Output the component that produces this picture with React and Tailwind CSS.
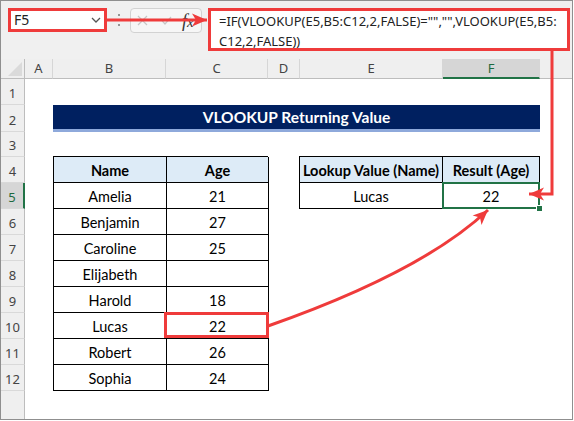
import React from "react";

const RED = "#ef3b3b";

function HeaderCell({ children, selected, last }) {
  return (
    <div
      className={
        "flex items-center justify-center pt-[1px] text-[13px] font-['Noto_Sans',sans-serif] border-b border-[#bdbdbd] " +
        (last ? "" : "border-r border-r-[#d6d6d6] ") +
        (selected
          ? "bg-[#d6d6d6] text-[#1d6a3f] border-b-2 border-b-[#217346]"
          : "bg-[#efefef] text-[#444]")
      }
    >
      {children}
    </div>
  );
}

function RowHead({ n, selected }) {
  return (
    <div
      className={
        "flex items-end justify-center pb-[1px] text-[13px] leading-[19px] font-['Noto_Sans',sans-serif] border-b border-[#d9d9d9] " +
        (selected
          ? "bg-[#d6d6d6] text-[#1d6a3f] border-r-2 border-r-[#217346]"
          : "bg-[#efefef] text-[#444] border-r border-r-[#bdbdbd]")
      }
    >
      {n}
    </div>
  );
}

const people = [
  ["Amelia", "21"],
  ["Benjamin", "27"],
  ["Caroline", "25"],
  ["Elijabeth", ""],
  ["Harold", "18"],
  ["Lucas", "22"],
  ["Robert", "26"],
  ["Sophia", "24"],
];

function Cell({ children, bold, head, className = "", overlay }) {
  return (
    <div
      className={
        "relative flex items-center justify-center pt-[2px] border-r border-b border-black text-[14.5px] text-black font-['Lato',sans-serif] " +
        (bold ? "font-bold " : "") +
        (head ? "bg-[#ddebf7] " : "bg-white ") +
        className
      }
    >
      {children}
      {overlay}
    </div>
  );
}

export default function App() {
  return (
    <div className="relative w-[574px] h-[421px] bg-white overflow-hidden">
      <div className="w-[573px] h-[420px] border border-[#8f8f8f] bg-[#f0f0f0] flex flex-col">
        {/* Formula bar */}
        <div className="h-[58px] flex items-start pt-[7px] pl-[7px]">
          <div className="w-[99px] h-[24px] border-[3px] border-[#ef3b3b] bg-white flex items-center justify-between pl-[3px] pr-[3px] text-[14px] text-[#222] font-['Noto_Sans',sans-serif]">
            <span className="leading-none">F5</span>
            <svg width="10" height="6" viewBox="0 0 10 6">
              <path d="M1 1 L5 5 L9 1" fill="none" stroke="#555" strokeWidth="1.3" />
            </svg>
          </div>
          <div className="w-[23px] h-[24px] flex flex-col items-center justify-center gap-[3px]">
            <span className="w-[2px] h-[2px] rounded-full bg-[#777]" />
            <span className="w-[2px] h-[2px] rounded-full bg-[#777]" />
            <span className="w-[2px] h-[2px] rounded-full bg-[#777]" />
          </div>
          <div className="w-[72px] h-[25px] rounded-[4px] border border-[#d2d2d2] bg-[#f6f6f6] flex items-center pl-[6px]">
            <svg width="11" height="11" viewBox="0 0 11 11">
              <path d="M1 1 L10 10 M10 1 L1 10" stroke="#c6c6c6" strokeWidth="1.2" />
            </svg>
            <svg className="ml-[12px]" width="12" height="10" viewBox="0 0 12 10">
              <path d="M1 3.5 L5 8 L11 1" fill="none" stroke="#c6c6c6" strokeWidth="1.2" />
            </svg>
            <span className="ml-[10px] italic text-[18px] leading-none text-[#333] font-['Liberation_Serif',serif]">
              f<span className="text-[15px]">x</span>
            </span>
          </div>
          <div className="ml-[6px] w-[362px] h-[43px] border-[3px] border-[#ef3b3b] bg-white pl-[8px] pt-0 text-[13px] leading-[20px] text-[#222] font-['Noto_Sans',sans-serif] whitespace-nowrap">
            <div>=IF(VLOOKUP(E5,B5:C12,2,FALSE)="","",VLOOKUP(E5,B5:</div>
            <div>C12,2,FALSE))</div>
          </div>
        </div>

        {/* Sheet */}
        <div className="flex-1 grid grid-cols-[24px_28px_113px_102px_32px_143px_97px_1fr] grid-rows-[20px_26px_27px_25px_26px_26px_26px_26px_26px_26px_26px_26px_26px_1fr]">
          <div className="col-start-1 row-start-1 bg-[#efefef] border-r border-b border-[#bdbdbd] flex items-end justify-end pr-[1px] pb-[1px]">
            <svg width="16" height="16" viewBox="0 0 16 16">
              <path d="M15 1 L15 15 L1 15 Z" fill="#dadada" />
            </svg>
          </div>
          <HeaderCell>A</HeaderCell>
          <HeaderCell>B</HeaderCell>
          <HeaderCell>C</HeaderCell>
          <HeaderCell>D</HeaderCell>
          <HeaderCell>E</HeaderCell>
          <HeaderCell selected>F</HeaderCell>
          <HeaderCell last></HeaderCell>

          {/* row headers */}
          <div className="col-start-1 row-start-2 row-end-15 grid grid-rows-[26px_27px_25px_26px_26px_26px_26px_26px_26px_26px_26px_26px_1fr]">
            {Array.from({ length: 12 }, (_, i) => (
              <RowHead key={i} n={i + 1} selected={i + 1 === 5} />
            ))}
            <div className="bg-[#efefef] border-r border-[#bdbdbd]" />
          </div>

          {/* white sheet */}
          <div className="col-start-2 col-end-9 row-start-2 row-end-15 bg-white" />

          {/* Title */}
          <div className="col-start-3 col-end-8 row-start-3 row-end-4 bg-[#002060] border-b-[3px] border-[#8ea9db] flex items-center justify-center pt-[2px] text-white font-bold text-[15.5px] font-['Lato',sans-serif]">
            VLOOKUP Returning Value
          </div>

          {/* Table 1 */}
          <div className="col-start-3 col-end-5 row-start-5 row-end-14 grid grid-cols-[113px_102px] grid-rows-[repeat(9,26px)] border-l border-t border-black -mt-px">
            <Cell bold head>Name</Cell>
            <Cell bold head>Age</Cell>
            {people.map(([n, a]) => (
              <React.Fragment key={n}>
                <Cell>{n}</Cell>
                <Cell
                  overlay={
                    n === "Lucas" ? (
                      <div className="absolute -top-[1px] -left-[3px] right-[-1px] bottom-0 border-[3px] border-[#ef3b3b]" />
                    ) : null
                  }
                >
                  {a}
                </Cell>
              </React.Fragment>
            ))}
          </div>

          {/* Table 2 */}
          <div className="col-start-6 col-end-8 row-start-5 row-end-7 grid grid-cols-[143px_97px] grid-rows-[26px_26px] border-l border-t border-black -mt-px -ml-px">
            <Cell bold head>Lookup Value (Name)</Cell>
            <Cell bold head>Result (Age)</Cell>
            <Cell>Lucas</Cell>
            <Cell
              overlay={
                <>
                  <div className="absolute -top-[1px] -left-[1px] -right-[1px] -bottom-[1px] border-2 border-[#217346]" />
                  <div className="absolute -right-[3px] -bottom-[3px] w-[6px] h-[6px] bg-[#217346] border-l border-t border-white" />
                </>
              }
            >
              22
            </Cell>
          </div>
        </div>
      </div>

      {/* Annotation arrows */}
      <svg
        className="absolute top-0 left-0 pointer-events-none"
        width="574"
        height="421"
        viewBox="0 0 574 421"
      >
        <defs>
          <marker
            id="ah"
            viewBox="-16 -8 17 16"
            refX="0"
            refY="0"
            markerWidth="17"
            markerHeight="16"
            markerUnits="userSpaceOnUse"
            orient="auto"
          >
            <path d="M0 0 L-15 -6.5 L-11 0 L-15 6.5 Z" fill={RED} />
          </marker>
        </defs>
        <path d="M107 20 L207 20" stroke={RED} strokeWidth="3" fill="none" markerEnd="url(#ah)" />
        <path d="M552 50 L552 194 L529 194" stroke={RED} strokeWidth="3" fill="none" markerEnd="url(#ah)" />
        <path d="M268 326 Q 422 272 488 210" stroke={RED} strokeWidth="3" fill="none" markerEnd="url(#ah)" />
      </svg>
    </div>
  );
}
